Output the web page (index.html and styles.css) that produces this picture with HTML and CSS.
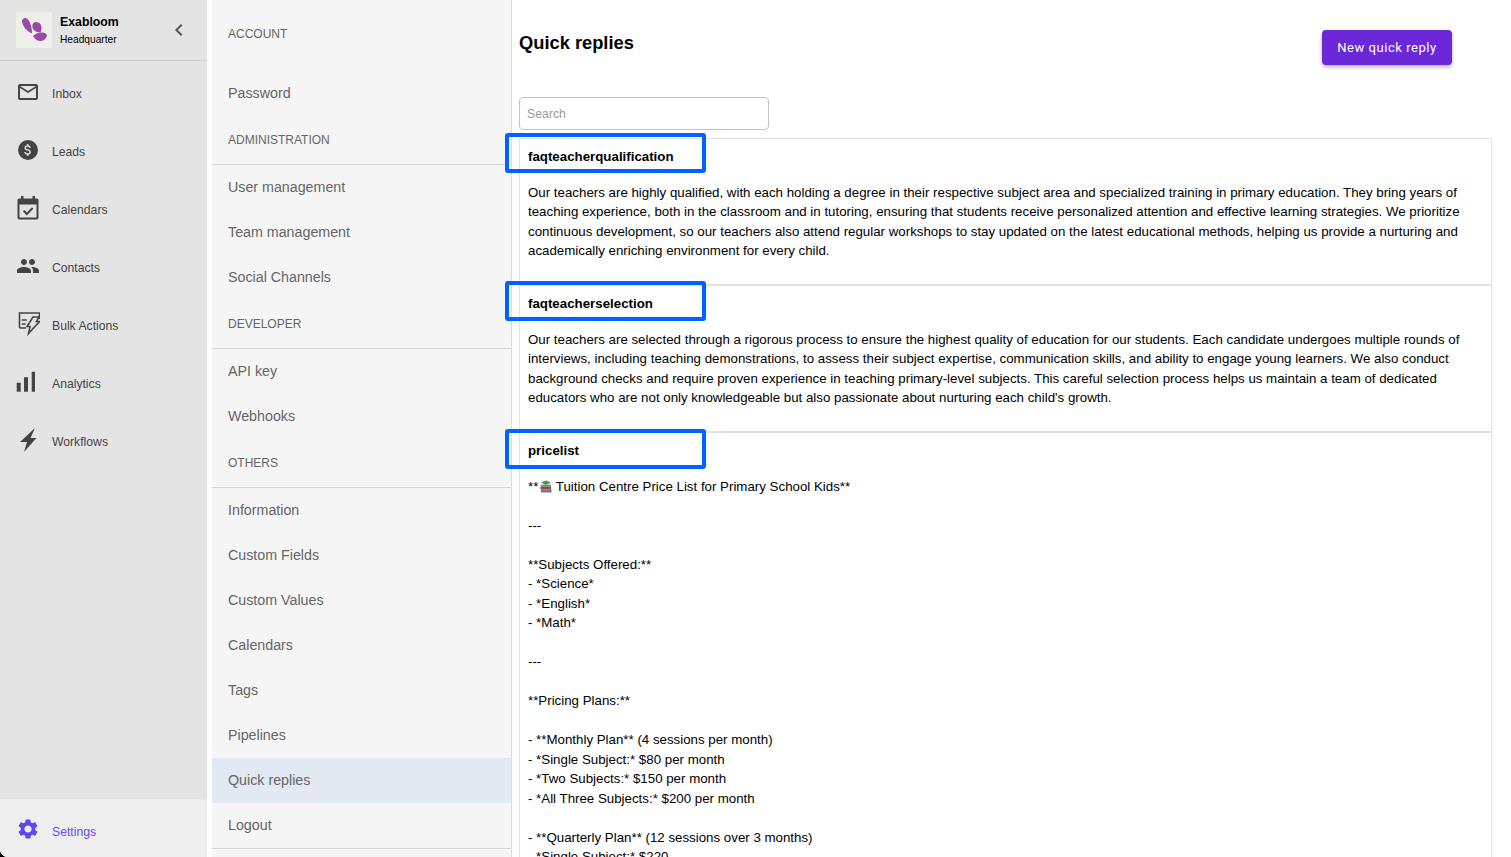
FILE: index.html
```html
<!DOCTYPE html>
<html>
<head>
    <meta charset="utf-8">
    <title>Quick replies</title>
    <link rel="stylesheet" href="styles.css">
</head>
<body>
<div class="app">
    <aside class="sidebar">
        <div class="brand">
            <div class="logo">
                <svg viewBox="0 0 36 36" width="36" height="36">
                    <path class="petal" d="M6 9c0-2 2-3.500 4-3 3 1 6 8 6 15.500-4-1.500-10-7-10-12.500z"/>
                    <path class="petal" d="M17.500 11c2-2 6-1 7.500 2 1 2.500.5 5.500-.5 7.500-3 0-6-1-7.500-3.500-1-2-1-4.500.5-6z"/>
                    <path class="petal" d="M17 24c3-3 7-4 10-3.500 2 .5 3.500 1.500 4 2.500-.5 3-3 6-6.500 6-3 0-6-2-7.500-5z"/>
                </svg>
            </div>
            <div class="brand-text">
                <div class="brand-name">Exabloom</div>
                <div class="brand-sub">Headquarter</div>
            </div>
            <svg class="collapse" viewBox="0 0 24 24" width="24" height="24"><path d="M15.400 7.400 14 6l-6 6 6 6 1.400-1.400L10.800 12z"/></svg>
        </div>
        <nav class="nav">
            <a class="nav-item"><svg viewBox="0 0 24 24"><path d="M22 6c0-1.100-.9-2-2-2H4c-1.100 0-2 .9-2 2v12c0 1.100.9 2 2 2h16c1.100 0 2-.9 2-2V6zm-2 0l-8 5-8-5h16zm0 12H4V8l8 5 8-5v10z"/></svg>Inbox</a>
            <a class="nav-item"><svg viewBox="0 0 24 24"><circle cx="12" cy="12" r="10"/><path class="cut" transform="translate(4.200 4.200) scale(.65)" d="M11.800 10.900c-2.270-.59-3-1.200-3-2.150 0-1.090 1.010-1.850 2.700-1.850 1.780 0 2.440.85 2.500 2.100h2.210c-.07-1.720-1.120-3.300-3.210-3.810V3h-3v2.160c-1.940.42-3.500 1.680-3.500 3.610 0 2.310 1.910 3.460 4.700 4.130 2.500.6 3 1.480 3 2.410 0 .69-.49 1.790-2.700 1.790-2.060 0-2.870-.92-2.980-2.100h-2.200c.12 2.190 1.760 3.420 3.680 3.830V21h3v-2.150c1.950-.37 3.500-1.500 3.500-3.550 0-2.840-2.430-3.810-4.700-4.400z"/></svg>Leads</a>
            <a class="nav-item"><svg viewBox="0 0 24 24"><path fill-rule="evenodd" d="M5 0h2.500v2.500h9V0H19v2.500h1.500a2 2 0 0 1 2 2v17a2 2 0 0 1-2 2h-17a2 2 0 0 1-2-2v-17a2 2 0 0 1 2-2H5zM3.500 8.500v13h17v-13z"/><path d="M17.500 12.600 16 11.200l-5.200 5.200-2.400-2.400-1.500 1.500 3.900 3.900z"/></svg>Calendars</a>
            <a class="nav-item"><svg viewBox="0 0 24 24"><path d="M16 11c1.660 0 2.990-1.340 2.990-3S17.660 5 16 5c-1.660 0-3 1.340-3 3s1.340 3 3 3zm-8 0c1.660 0 2.990-1.340 2.990-3S9.660 5 8 5C6.340 5 5 6.340 5 8s1.340 3 3 3zm0 2c-2.330 0-7 1.170-7 3.500V19h14v-2.500c0-2.330-4.670-3.500-7-3.500zm8 0c-.29 0-.62.02-.97.05 1.160.84 1.970 1.970 1.970 3.450V19h6v-2.500c0-2.330-4.670-3.500-7-3.500z"/></svg>Contacts</a>
            <a class="nav-item"><svg viewBox="0 0 24 24"><path class="line" d="M10 16H4.500a1 1 0 0 1-1-1V1h20v6M5.700 8h5M5.700 12h4M5.700 16h2"/><path class="line" d="M17 5h6l-2.500 4.500h3L12.500 21.500l1.500-7h-3z"/></svg>Bulk Actions</a>
            <a class="nav-item"><svg viewBox="0 0 24 24"><path d="M.7 12.700h4v9h-4zM8 7.300h4v14.400H8zM15.700 1.700H19v20h-3.300z"/></svg>Analytics</a>
            <a class="nav-item"><svg viewBox="0 0 24 24"><path d="M19 0 4 14h7L8 24l12.500-14h-6z"/></svg>Workflows</a>
        </nav>
        <a class="nav-item settings"><svg viewBox="0 0 24 24"><path d="M19.140 12.940c.04-.3.06-.61.06-.94 0-.32-.02-.64-.07-.94l2.030-1.580c.18-.14.23-.41.12-.61l-1.920-3.320c-.12-.22-.37-.29-.59-.22l-2.390.96c-.5-.38-1.030-.7-1.620-.94l-.36-2.540c-.04-.24-.24-.41-.48-.41h-3.840c-.24 0-.43.17-.47.41l-.36 2.540c-.59.24-1.130.57-1.620.94l-2.390-.96c-.22-.08-.47 0-.59.22L2.740 8.870c-.12.21-.08.47.12.61l2.030 1.580c-.05.3-.09.63-.09.94s.02.64.07.94l-2.030 1.580c-.18.14-.23.41-.12.61l1.920 3.320c.12.22.37.29.59.22l2.390-.96c.5.38 1.030.7 1.620.94l.36 2.540c.05.24.24.41.48.41h3.840c.24 0 .44-.17.47-.41l.36-2.540c.59-.24 1.130-.56 1.620-.94l2.390.96c.22.08.47 0 .59-.22l1.920-3.320c.12-.22.07-.47-.12-.61l-2.010-1.580zM12 15.600c-1.980 0-3.600-1.620-3.600-3.600s1.620-3.600 3.600-3.600 3.600 1.620 3.600 3.600-1.620 3.600-3.600 3.600z"/></svg>Settings</a>
    </aside>

    <section class="menu">
        <div class="menu-heading first">ACCOUNT</div>
        <a class="menu-item">Password</a>
        <div class="menu-heading">ADMINISTRATION</div>
        <a class="menu-item">User management</a>
        <a class="menu-item">Team management</a>
        <a class="menu-item">Social Channels</a>
        <div class="menu-heading">DEVELOPER</div>
        <a class="menu-item">API key</a>
        <a class="menu-item">Webhooks</a>
        <div class="menu-heading">OTHERS</div>
        <a class="menu-item">Information</a>
        <a class="menu-item">Custom Fields</a>
        <a class="menu-item">Custom Values</a>
        <a class="menu-item">Calendars</a>
        <a class="menu-item">Tags</a>
        <a class="menu-item">Pipelines</a>
        <a class="menu-item active">Quick replies</a>
        <a class="menu-item last">Logout</a>
    </section>

    <main class="main">
        <div class="topbar">
            <h1>Quick replies</h1>
            <button class="new-btn">New quick reply</button>
        </div>
        <input class="search" type="text" placeholder="Search">

        <div class="card">
            <div class="highlight"></div>
            <div class="card-title">faqteacherqualification</div>
            <div class="card-body">Our teachers are highly qualified, with each holding a degree in their respective subject area and specialized training in primary education. They bring years of teaching experience, both in the classroom and in tutoring, ensuring that students receive personalized attention and effective learning strategies. We prioritize continuous development, so our teachers also attend regular workshops to stay updated on the latest educational methods, helping us provide a nurturing and academically enriching environment for every child.</div>
        </div>
        <div class="card">
            <div class="highlight"></div>
            <div class="card-title">faqteacherselection</div>
            <div class="card-body">Our teachers are selected through a rigorous process to ensure the highest quality of education for our students. Each candidate undergoes multiple rounds of interviews, including teaching demonstrations, to assess their subject expertise, communication skills, and ability to engage young learners. We also conduct background checks and require proven experience in teaching primary-level subjects. This careful selection process helps us maintain a team of dedicated educators who are not only knowledgeable but also passionate about nurturing each child's growth.</div>
        </div>
        <div class="card">
            <div class="highlight"></div>
            <div class="card-title">pricelist</div>
            <div class="card-body">**<svg class="books" viewBox="0 0 14 14" width="13" height="13"><path fill="#4c9a3f" d="M2 2.500 8 .5l5 2.500-6 2.500z"/><path fill="#7f8a90" d="M2 5h11v2.500H2z"/><path fill="#a8433f" d="M1.500 7.500H13V10H1.500z"/><path fill="#6f7c86" d="M2 10h11.500v3.500H2z"/></svg> Tuition Centre Price List for Primary School Kids**

---

**Subjects Offered:**
- *Science*
- *English*
- *Math*

---

**Pricing Plans:**

- **Monthly Plan** (4 sessions per month)
- *Single Subject:* $80 per month
- *Two Subjects:* $150 per month
- *All Three Subjects:* $200 per month

- **Quarterly Plan** (12 sessions over 3 months)
- *Single Subject:* $220</div>
        </div>
    </main>
</div>
</body>
</html>
```

FILE: styles.css
```css
html, body {
    margin: 0;
    height: 100%;
    overflow: hidden;
    background: #000;
}
body {
    font-family: "Liberation Sans", Arial, sans-serif;
    color: #000;
}
.app {
    display: flex;
    height: 857px;
    background: #fff;
    border-bottom-left-radius: 8px;
    overflow: hidden;
}

/* left sidebar */
.sidebar {
    width: 207px;
    flex: none;
    display: flex;
    flex-direction: column;
    background: #e4e4e4;
}
.brand {
    height: 60px;
    flex: none;
    display: flex;
    align-items: center;
    gap: 8px;
    padding: 0 16px;
    border-bottom: 1px solid #cbcbcb;
}
.logo {
    width: 36px;
    height: 36px;
    background: #efefe9;
    border-radius: 3px;
}
.petal {
    fill: #9b48a6;
}
.brand-text {
    flex: 1;
    padding-top: 2px;
}
.brand-name {
    font-size: 12.3px;
    font-weight: bold;
    line-height: 16px;
    margin-bottom: 2px;
}
.brand-sub {
    font-size: 10.2px;
    line-height: 16px;
}
.collapse {
    fill: #555;
}
.nav {
    flex: 1;
    padding-top: 3px;
}
.nav-item {
    box-sizing: border-box;
    height: 58px;
    display: flex;
    align-items: center;
    gap: 12px;
    padding: 2px 0 0 16px;
    font-size: 12.2px;
    color: #444;
}
.nav-item svg {
    width: 24px;
    height: 24px;
    fill: #444;
    margin-top: -4px;
}
.nav-item svg .line {
    fill: none;
    stroke: #444;
    stroke-width: 1.600;
}
.nav-item svg .cut {
    fill: #e4e4e4;
}
.nav-item.settings {
    flex: none;
    padding-top: 8px;
    background: #eeeeee;
    color: #6a4ff5;
}
.nav-item.settings svg {
    fill: #5f45f5;
    margin-top: -6px;
}

/* settings menu */
.menu {
    width: 299px;
    flex: none;
    margin-left: 5px;
    background: #f5f5f5;
    border-right: 1px solid #dcdcdc;
}
.menu-heading {
    height: 49px;
    box-sizing: border-box;
    display: flex;
    align-items: center;
    padding-left: 16px;
    font-size: 12px;
    color: #666;
    border-bottom: 1px solid #d6d6d6;
}
.menu-heading.first {
    height: 71px;
    padding-bottom: 4px;
    border-bottom: none;
}
.menu-item {
    height: 45px;
    box-sizing: border-box;
    display: flex;
    align-items: center;
    padding: 0 0 2px 16px;
    font-size: 14.25px;
    color: #666;
}
.menu-item.active {
    background: #e2e9f3;
}
.menu-item.last {
    height: 46px;
    padding-bottom: 2px;
    border-bottom: 1px solid #d6d6d6;
}

/* main content */
.main {
    flex: 1;
    min-width: 0;
    padding: 0 19px 0 7px;
}
.topbar {
    display: flex;
    justify-content: space-between;
    align-items: flex-start;
    height: 97px;
    padding-right: 40px;
}
.topbar h1 {
    margin: 32px 0 0;
    font-size: 18.3px;
    line-height: 21px;
}
.new-btn {
    margin-top: 30px;
    width: 130px;
    height: 35px;
    border: none;
    border-radius: 4px;
    background: #6c27d9;
    color: #fff;
    font-family: Roboto, sans-serif;
    font-size: 13px;
    font-weight: 400;
    letter-spacing: .55px;
    box-shadow: 0 2px 4px rgba(0, 0, 0, .3);
}
.search {
    display: block;
    box-sizing: border-box;
    width: 250px;
    height: 33px;
    margin: 0 0 8px;
    padding: 0 7px;
    border: 1px solid #c4c4c4;
    border-radius: 4px;
    font-family: "Liberation Sans", Arial, sans-serif;
    font-size: 12.3px;
}
.search::placeholder {
    color: #9a9a9a;
}
.card {
    position: relative;
    border: 1px solid #e2e2e2;
    border-bottom-width: 2px;
    padding: 0 9px 23.5px 8px;
    margin-bottom: -1px;
}
.highlight {
    position: absolute;
    left: -15px;
    top: -6px;
    width: 193px;
    height: 32px;
    border: 4px solid #0062ff;
    border-radius: 3px;
}
.card + .card .highlight {
    top: -5px;
}
.card + .card + .card .highlight {
    top: -4px;
}
.card-title {
    padding-top: 10px;
    font-size: 13.3px;
    font-weight: bold;
    line-height: 16px;
    margin-bottom: 17.5px;
}
.card-body {
    font-size: 13.3px;
    line-height: 19.500px;
    white-space: pre-wrap;
}
.books {
    margin-left: 1px;
    vertical-align: -2px;
}
```
